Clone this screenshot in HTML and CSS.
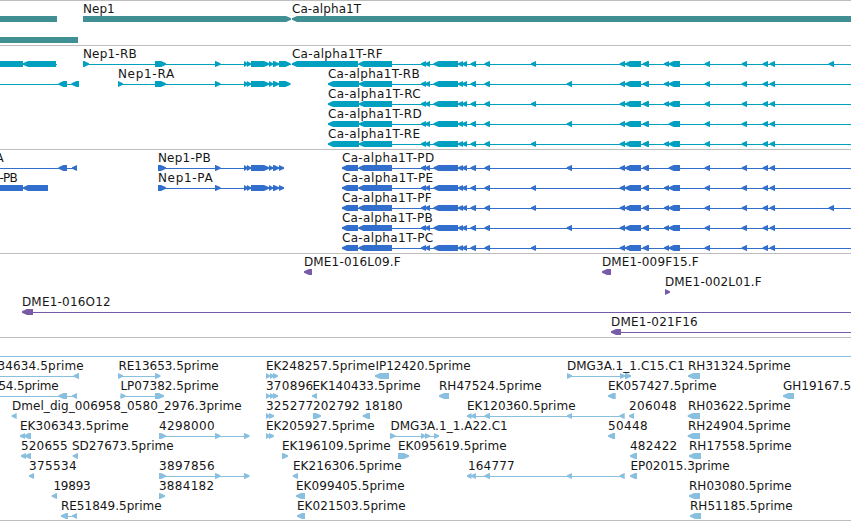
FILE: index.html
```
<!DOCTYPE html>
<html lang="en">
<head>
<meta charset="UTF-8">
<title>Genome browser</title>
<link rel="stylesheet" href="styles.css">
</head>
<body>
<div class="browser">
  <div class="track genes" id="genes"></div>
  <div class="track transcripts" id="transcripts"></div>
  <div class="track proteins" id="proteins"></div>
  <div class="track clones" id="clones"></div>
  <div class="track ests" id="ests"></div>
</div>
<script src="tracks.js"></script>
</body>
</html>
```
FILE: styles.css
```
body {
  margin: 0;
  background-color: white;
  font-family: "DejaVu Sans", sans-serif;
  font-size: 12px;
}
.browser {
  width: 851px;
  height: 521px;
  overflow: hidden;
  display: flex;
  flex-direction: column;
}
.track {
  box-sizing: border-box;
  border-top: 1px solid #bdbdbd;
  padding-top: 2px;
  height: 104px;
  flex: none;
}
.row {
  display: block;
  width: 851px;
  height: 20px;
  overflow: visible;
}
.row text {
  fill: #161616;
}
.genes {
  height: 45px;
  fill: #3f8f93;
}
.genes .row {
  height: 21px;
}
.transcripts {
  fill: #02a0c0;
}
.proteins {
  fill: #326ecb;
}
.clones {
  height: 84px;
  fill: #775ba7;
}
.ests {
  height: 184px;
  border-bottom: 1px solid #bdbdbd;
  fill: #89bfdf;
}
```
FILE: tracks.js
```
// feature: [label, label start, label end, line ("from-to" or ""), arrows]
// arrows: "<a-b" points left, ">a-b" points right, "=a-b" is a plain block

const exons = "<421-426 <425-430 <433.5-458 <458-463 <462-467 <470.5-476 <484.5-490 <619.7-625 <625-641 <642.7-649 <668.7-680 <704.7-710 <741.7-747 <762.7-768 <769.7-775";
const ex531 = " <531-536";
const ex567 = " <566.7-572";
const ex664 = " <664-669";
const ex829 = " <828.7-834";
const utr = "<328-359 <359-392 " + exons;
const cds = "<342-358 <358.5-392 " + exons;
const nepEnd = " >215-220.5 >244-248 >247-251 >251-269 >269-273 >273-279";
const pair = ">159-166 >215-220.5 >244-249.5";
const ek12 = "<467-471.5 <471-476 <484.5-490 <567-572 <619.5-624.7";

const tracks = {
  genes: [
    [["", 0, 0, "", "=0-57"],
     ["Nep1", 83.5, 114.5, "", ">83-291"],
     ["Ca-alpha1T", 292.5, 361, "", "<292-860"]],
    [["", 0, 0, "", "=0-78"]]
  ],
  transcripts: [
    [["", 0, 0, "0-57", "=0-23 <23-56"],
     ["Nep1-RB", 83.5, 136.5, "83-291", ">83-89 >155-166" + nepEnd + " >279-290.5"],
     ["Ca-alpha1T-RF", 292.5, 382.5, "292-851", "<292-358 <358.5-392 " + exons + ex531 + ex664 + ex829]],
    [["", 0, 0, "0-79", "<58.5-67 <71.5-79"],
     ["Nep1-RA", 118.5, 174, "118-290", ">118-123 >155-166" + nepEnd + " >279-290.5"],
     ["Ca-alpha1T-RB", 328.5, 419.5, "328-851", utr + ex567 + ex664]],
    [["Ca-alpha1T-RC", 328.5, 420.5, "328-851", utr + ex531 + ex664]],
    [["Ca-alpha1T-RD", 328.5, 421.5, "328-851", utr + ex567]],
    [["Ca-alpha1T-RE", 328.5, 420, "328-851", utr + ex531 + ex664]]
  ],
  proteins: [
    [["A", -4, 4, "0-77", "<58.5-67 <72-77"],
     ["Nep1-PB", 158.5, 210.5, "158-284", ">158-166" + nepEnd + " >279-284"],
     ["Ca-alpha1T-PD", 342.5, 434, "342-851", cds + ex567]],
    [["-PB", 0, 17.5, "", "=0-23 <23-48"],
     ["Nep1-PA", 158.5, 212.5, "158-284", ">158-166" + nepEnd + " >279-284"],
     ["Ca-alpha1T-PE", 342.5, 433, "342-851", cds + ex531 + ex664]],
    [["Ca-alpha1T-PF", 342.5, 431.5, "342-851", cds + ex531 + ex664 + ex829]],
    [["Ca-alpha1T-PB", 342.5, 432.5, "342-851", cds + ex567 + ex664]],
    [["Ca-alpha1T-PC", 342.5, 433, "342-851", cds + ex531 + ex664]]
  ],
  clones: [
    [["DME1-016L09.F", 304.5, 400.5, "", "<304-312"],
     ["DME1-009F15.F", 602.5, 698.5, "", "<602-611"]],
    [["DME1-002L01.F", 665.5, 761.5, "", ">665-670"]],
    [["DME1-016O12", 22.5, 110.5, "22-851", "<22-33"]],
    [["DME1-021F16", 611.5, 697.5, "611-851", "<611-621"]]
  ],
  ests: [
    [["", 0, 0, "0-851", ""]],
    [["34634.5prime", -2, 83.5, "0-79", "<73.5-79"],
     ["RE13653.5prime", 119, 218.5, "118-160", ">118-123 >155-160.5"],
     ["EK248257.5prime", 266.5, 375, "", ">266-270 >270-274 >273-278"],
     ["IP12420.5prime", 376, 470.5, "", "<375-389"],
     ["DMG3A.1_1.C15.C1", 567.5, 684.5, "567-630", ">567-572 >620-625 >625-631"],
     ["RH31324.5prime", 688.5, 790.5, "", "<688-700"]],
    [["54.5prime", -1, 58.5, "0-77", "<58.5-67 <72-77"],
     ["LP07382.5prime", 121, 218.5, "120-163", ">120.5-125.5 >155-164"],
     ["370896", 266.5, 313, "", ">266-270 >270-274 >273-278"],
     ["EK140433.5prime", 313, 420.5, "", "<312-317"],
     ["RH47524.5prime", 439.5, 541.5, "", "<439-449"],
     ["EK057427.5prime", 608.5, 716.5, "", "<608-615.7"],
     ["GH19167.5prime", 783.5, 886, "", "<783-794"]],
    [["Dmel_dig_006958_0580_2976.3prime", 12.5, 241.5, "", "<11.7-16.7"],
     ["325277", 266.5, 313, "", ">266-270 >269-274"],
     ["202792", 313.5, 359.5, "", ">313-321"],
     ["18180", 365, 402.5, "", "<362.7-370"],
     ["EK120360.5prime", 467.5, 575.5, "467-624", ek12],
     ["206048", 629.5, 676.5, "", "<629-634"],
     ["RH03622.5prime", 688.5, 790.5, "", "<687.7-700"]],
    [["EK306343.5prime", 20.5, 128.5, "", "<20-25 <24-31"],
     ["4298000", 159.5, 214.5, "159-249", pair],
     ["EK205927.5prime", 266.5, 374.5, "", ">266-270 >269-274"],
     ["DMG3A.1_1.A22.C1", 391, 507.5, "390-438", ">390-395.5 >421-425.5 >425-430 >434-439"],
     ["50448", 608.5, 647.5, "", "<608-615"],
     ["RH24904.5prime", 688.5, 790.5, "", "<687.7-700"]],
    [["520655", 21.5, 67.5, "", "<21-26 <25-31"],
     ["SD27673.5prime", 72.5, 173.5, "", "<72.7-78"],
     ["EK196109.5prime", 282.5, 390.5, "", ">282-288"],
     ["EK095619.5prime", 398.5, 506.5, "", ">398-409"],
     ["482422", 630.5, 677, "", "<630-637"],
     ["RH17558.5prime", 689.5, 791.5, "", "<689-701"]],
    [["375534", 29.5, 76.5, "", "<29-34"],
     ["3897856", 159.5, 214.5, "159-249", pair],
     ["EK216306.5prime", 293.5, 401.5, "", "<292.7-298"],
     ["164777", 468.5, 514.5, "467-624", ek12],
     ["EP02015.3prime", 631, 729.5, "", "<630-637"]],
    [["19893", 54, 90.5, "", "<51.7-57"],
     ["3884182", 159.5, 214, "", ">159-165"],
     ["EK099405.5prime", 296.5, 404.5, "", "<296-305"],
     ["RH03080.5prime", 689.5, 791.5, "", "<689-700"]],
    [["RE51849.5prime", 61.5, 161.5, "61-77", "<61-68 <72-77"],
     ["EK021503.5prime", 297.5, 405.5, "", "<297-305"],
     ["RH51185.5prime", 690.5, 792.5, "", "<690-701"]]
  ]
};

function arrow(code) {
  const dir = code[0];
  const [a, b] = code.slice(1).split("-").map(Number);
  const head = Math.min(b - a, 5);
  if (dir === "<") {
    return `<path d="M${a} 15.2L${a + head} 13H${b}V19H${a + head}L${a} 16.8Z"/>`;
  }
  if (dir === ">") {
    return `<path d="M${b} 15.2L${b - head} 13H${a}V19H${b - head}L${b} 16.8Z"/>`;
  }
  return `<rect x="${a}" y="13" width="${b - a}" height="6"/>`;
}

function feature([label, x1, x2, line, arrows]) {
  let out = "";
  if (line) {
    const [a, b] = line.split("-").map(Number);
    out += `<rect x="${a}" y="16" width="${b - a}" height="1"/>`;
  }
  if (arrows) {
    out += arrows.split(" ").map(arrow).join("");
  }
  if (label) {
    out += `<text x="${x1 - 0.6}" y="10" textLength="${x2 - x1 + 0.8}">${label}</text>`;
  }
  return out;
}

for (const id in tracks) {
  document.getElementById(id).innerHTML = tracks[id]
    .map(row => `<svg class="row">${row.map(feature).join("")}</svg>`)
    .join("");
}
```
